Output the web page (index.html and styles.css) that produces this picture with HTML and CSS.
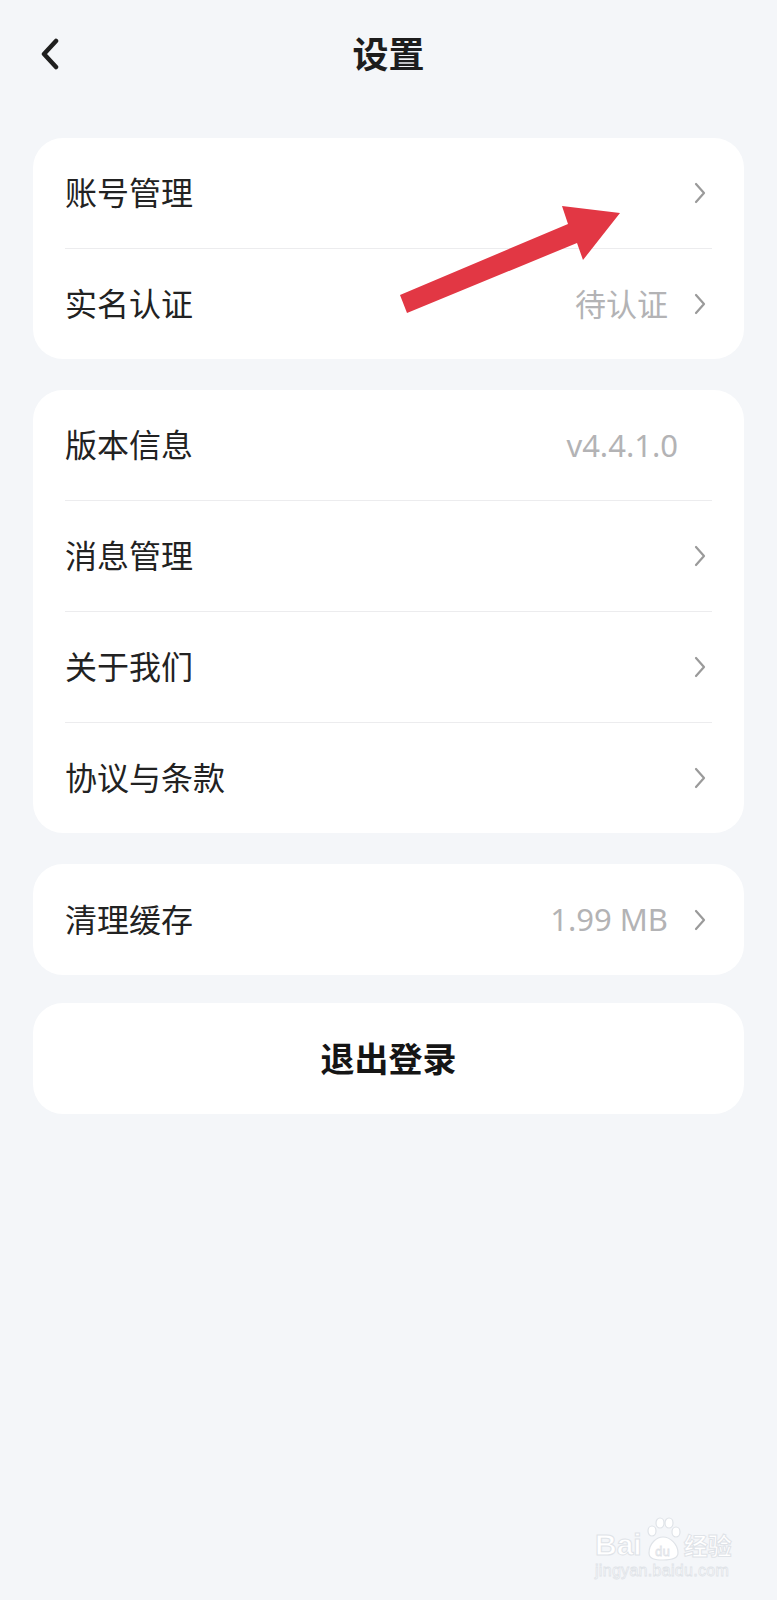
FILE: index.html
```html
<!DOCTYPE html>
<html lang="zh-CN">
<head>
<meta charset="utf-8">
<title>设置</title>
<link rel="stylesheet" href="styles.css">
</head>
<body>
<div class="page">
  <header class="topbar">
    <div class="back">
      <svg width="20" height="32" viewBox="0 0 20 32"><path d="M16 3 L4 16 L16 29" fill="none" stroke="#1f1f1f" stroke-width="4.5" stroke-linecap="round" stroke-linejoin="round"/></svg>
    </div>
    <h1 class="title">设置</h1>
    <div></div>
  </header>

  <section class="card">
    <div class="row"><span class="label">账号管理</span><span class="right"><svg class="chev" width="14" height="22" viewBox="0 0 14 22"><path d="M3 2 L11 11 L3 20" fill="none" stroke="#9a9a9a" stroke-width="2.2" stroke-linecap="round" stroke-linejoin="round"/></svg></span></div>
    <div class="divider"></div>
    <div class="row"><span class="label">实名认证</span><span class="right"><span class="value">待认证</span><svg class="chev" width="14" height="22" viewBox="0 0 14 22"><path d="M3 2 L11 11 L3 20" fill="none" stroke="#9a9a9a" stroke-width="2.2" stroke-linecap="round" stroke-linejoin="round"/></svg></span></div>
  </section>

  <section class="card">
    <div class="row"><span class="label">版本信息</span><span class="right"><span class="value version">v4.4.1.0</span></span></div>
    <div class="divider"></div>
    <div class="row"><span class="label">消息管理</span><span class="right"><svg class="chev" width="14" height="22" viewBox="0 0 14 22"><path d="M3 2 L11 11 L3 20" fill="none" stroke="#9a9a9a" stroke-width="2.2" stroke-linecap="round" stroke-linejoin="round"/></svg></span></div>
    <div class="divider"></div>
    <div class="row"><span class="label">关于我们</span><span class="right"><svg class="chev" width="14" height="22" viewBox="0 0 14 22"><path d="M3 2 L11 11 L3 20" fill="none" stroke="#9a9a9a" stroke-width="2.2" stroke-linecap="round" stroke-linejoin="round"/></svg></span></div>
    <div class="divider"></div>
    <div class="row"><span class="label">协议与条款</span><span class="right"><svg class="chev" width="14" height="22" viewBox="0 0 14 22"><path d="M3 2 L11 11 L3 20" fill="none" stroke="#9a9a9a" stroke-width="2.2" stroke-linecap="round" stroke-linejoin="round"/></svg></span></div>
  </section>

  <section class="card single">
    <div class="row"><span class="label">清理缓存</span><span class="right"><span class="value">1.99 MB</span><svg class="chev" width="14" height="22" viewBox="0 0 14 22"><path d="M3 2 L11 11 L3 20" fill="none" stroke="#9a9a9a" stroke-width="2.2" stroke-linecap="round" stroke-linejoin="round"/></svg></span></div>
  </section>

  <section class="card single logout">
    <div class="row center"><span class="logout-text">退出登录</span></div>
  </section>

  <svg class="annotation" width="777" height="400" viewBox="0 0 777 400">
    <polygon points="400,295 568,224 562,206 620,213 583,260 577,243 407,313" fill="#e23744"/>
  </svg>

  <div class="watermark">
    <div class="wm-top">
      <span class="wm-bai">Bai</span>
      <svg class="wm-paw" width="40" height="44" viewBox="0 0 40 44">
        <g fill="#ffffff" stroke="#dfe3e8" stroke-width="1.2">
          <ellipse cx="9" cy="14" rx="4" ry="5"/>
          <ellipse cx="17" cy="6" rx="4" ry="5"/>
          <ellipse cx="26" cy="6" rx="4" ry="5"/>
          <ellipse cx="33" cy="15" rx="4" ry="5"/>
          <path d="M6 36 C6 26 14 20 20 20 C27 20 35 27 35 36 C35 42 28 43 20 43 C12 43 6 42 6 36 Z"/>
        </g>
        <text x="12" y="39" font-size="12" font-family="Noto Sans, sans-serif" fill="#ffffff" stroke="#dfe3e8" stroke-width="0.8">du</text>
      </svg>
      <span class="wm-jy">经验</span>
    </div>
    <div class="wm-url">jingyan.baidu.com</div>
  </div>
</div>
</body>
</html>
```

FILE: styles.css
```css
* { box-sizing: border-box; }
html, body {
  margin: 0;
  padding: 0;
  background: #f4f6f9;
}
body {
  font-family: "Noto Sans", "Noto Sans CJK SC", sans-serif;
  color: #222222;
}
.page {
  position: relative;
  width: 777px;
  min-height: 1600px;
  padding-bottom: 20px;
}
.topbar {
  height: 110px;
  display: grid;
  grid-template-columns: 1fr auto 1fr;
  align-items: center;
  padding: 0 40px;
}
.back {
  display: flex;
  align-items: center;
  height: 32px;
  margin-top: -2px;
}
.title {
  margin: 0;
  font-size: 36px;
  font-weight: 700;
  color: #1d1d1d;
  line-height: 1;
  margin-top: -1px;
}
.card {
  background: #ffffff;
  border-radius: 30px;
  margin: 28px 33px 0 33px;
  padding: 0 32px;
}
.card + .card { margin-top: 31px; }
.card.logout { margin-top: 28px; }
.row {
  height: 110px;
  display: flex;
  align-items: center;
  justify-content: space-between;
}
.card.single .row { height: 111px; }
.row.center { justify-content: center; }
.label {
  font-size: 32px;
  color: #222222;
  line-height: 1;
}
.right {
  display: flex;
  align-items: center;
  gap: 25px;
}
.value {
  font-size: 31px;
  color: #b3b3b5;
  line-height: 1;
}
.value.version { margin-right: 34px; }
.chev { margin-right: 5px; display: block; }
.divider {
  height: 1px;
  background: #ececee;
}
.logout-text {
  font-size: 34px;
  font-weight: 700;
  color: #151515;
  line-height: 1;
}
.annotation {
  position: absolute;
  top: 0;
  left: 0;
  pointer-events: none;
}
.watermark {
  position: absolute;
  left: 595px;
  top: 1515px;
  width: 140px;
  color: #ffffff;
  font-family: "Liberation Sans", "Noto Sans CJK SC", sans-serif;
}
.wm-top {
  display: flex;
  align-items: flex-end;
  height: 46px;
}
.wm-bai {
  font-size: 30px;
  font-weight: 700;
  line-height: 1;
  -webkit-text-stroke: 1px #dfe3e8;
  color: #ffffff;
  margin-bottom: 1px;
}
.wm-paw { display: block; margin: 0 1px; }
.wm-jy {
  font-size: 24px;
  font-weight: 700;
  line-height: 1;
  -webkit-text-stroke: 1px #dfe3e8;
  margin-bottom: 2px;
}
.wm-url {
  font-size: 16px;
  line-height: 1;
  margin-top: 2px;
  -webkit-text-stroke: 0.8px #dfe3e8;
  letter-spacing: 0.3px;
}
```
